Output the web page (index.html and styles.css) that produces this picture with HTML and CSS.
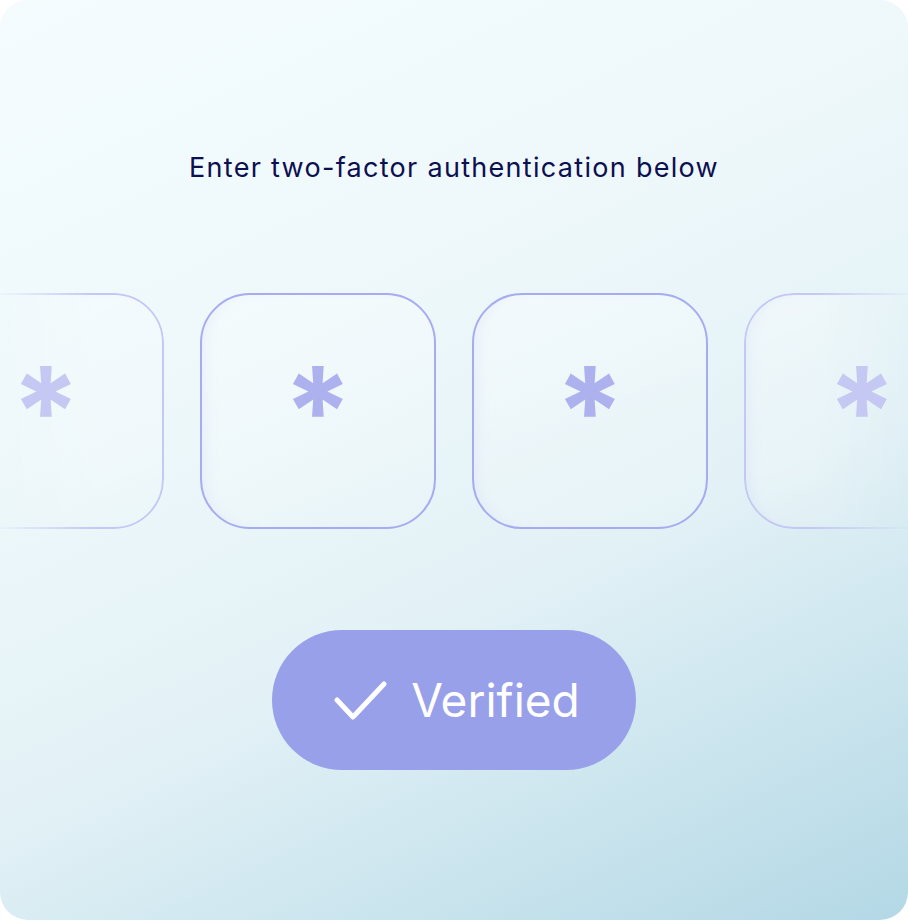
FILE: index.html
```html
<!DOCTYPE html>
<html lang="en">
<head>
<meta charset="utf-8">
<title>Two-factor authentication</title>
<link rel="stylesheet" href="styles.css">
</head>
<body>
<main class="card">
  <h1 class="title">Enter two-factor authentication below</h1>
  <div class="codes">
    <div class="code code-fade-left"><span class="star">*</span></div>
    <div class="code"><span class="star">*</span></div>
    <div class="code"><span class="star">*</span></div>
    <div class="code code-fade-right"><span class="star">*</span></div>
  </div>
  <button class="verified" type="button">
    <svg class="check" width="54" height="40" viewBox="0 0 54 40" aria-hidden="true">
      <polyline points="3,19 19,36 50,3" fill="none" stroke="#ffffff" stroke-width="5" stroke-linecap="round" stroke-linejoin="round"/>
    </svg>
    <span class="verified-label">Verified</span>
  </button>
</main>
</body>
</html>
```
FILE: styles.css
```css
html, body {
  margin: 0;
  padding: 0;
  background: #ffffff;
}

.card {
  width: 908px;
  height: 920px;
  box-sizing: border-box;
  border-radius: 28px;
  overflow: hidden;
  background: linear-gradient(155deg, #f4fcfe 0%, #eef8fb 35%, #e2f1f6 62%, #b3d8e5 100%);
  display: flex;
  flex-direction: column;
  align-items: center;
  padding-top: 148px;
  font-family: Inter, "Liberation Sans", sans-serif;
}

.title {
  margin: 0;
  height: 40px;
  line-height: 40px;
  font-size: 27px;
  font-weight: 400;
  color: #0c0f50;
  letter-spacing: 1.3px;
  white-space: nowrap;
}

.codes {
  display: flex;
  gap: 36px;
  margin-top: 105px;
  flex-shrink: 0;
}

.code {
  position: relative;
  width: 236px;
  height: 236px;
  flex-shrink: 0;
  display: flex;
  align-items: center;
  justify-content: center;
}

.code::before {
  content: "";
  position: absolute;
  inset: 0;
  box-sizing: border-box;
  border: 2.5px solid #a6acef;
  border-radius: 50px;
  background: linear-gradient(160deg, rgba(255, 255, 255, 0.35), rgba(255, 255, 255, 0.1));
  box-shadow: inset 10px 0 14px -8px rgba(180, 184, 240, 0.18);
}

.code-fade-left::before {
  border-color: #c4c8f4;
  -webkit-mask-image: linear-gradient(to right, transparent 65px, #000 165px);
  mask-image: linear-gradient(to right, transparent 65px, #000 165px);
}

.code-fade-right::before {
  border-color: #c4c8f4;
  -webkit-mask-image: linear-gradient(to left, transparent 65px, #000 165px);
  mask-image: linear-gradient(to left, transparent 65px, #000 165px);
}

.star {
  position: relative;
  font-family: Inter, "DejaVu Sans", sans-serif;
  font-size: 124px;
  font-weight: 700;
  line-height: 1;
  color: #adb2ef;
}

.code-fade-left .star,
.code-fade-right .star {
  color: #c4c8f3;
}

.verified {
  margin-top: 101px;
  width: 364px;
  height: 140px;
  flex-shrink: 0;
  border: none;
  border-radius: 70px;
  background: #99a0ea;
  display: flex;
  align-items: center;
  justify-content: center;
  gap: 23px;
  padding: 0 0 0 6px;
  font-family: Inter, "Liberation Sans", sans-serif;
  cursor: pointer;
}

.check {
  display: block;
  margin-top: 2px;
}

.verified-label {
  font-size: 46px;
  font-weight: 400;
  color: #ffffff;
  line-height: 1;
}
```
